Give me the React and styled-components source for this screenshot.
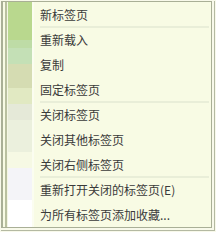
import React from "react";
import styled, { createGlobalStyle } from "styled-components";

const GlobalStyle = createGlobalStyle`
  html, body {
    margin: 0;
    padding: 0;
    background: #f8f9ea;
  }
  body {
    font-family: "Noto Sans CJK SC", "Noto Sans", sans-serif;
  }
`;

const items = [
  { label: "新标签页", sep: true },
  { label: "重新载入" },
  { label: "复制" },
  { label: "固定标签页", sep: true },
  { label: "关闭标签页" },
  { label: "关闭其他标签页" },
  { label: "关闭右侧标签页", sep: true },
  { label: "重新打开关闭的标签页(E)" },
  { label: "为所有标签页添加收藏..." },
];

const App = () => {
  return (
    <>
      <GlobalStyle />
      <Frame>
        <Menu>
          <Gutter />
          <List>
            {items.map((item) => (
              <React.Fragment key={item.label}>
                <Item>{item.label}</Item>
                {item.sep && <Separator />}
              </React.Fragment>
            ))}
          </List>
        </Menu>
      </Frame>
    </>
  );
};

const Frame = styled.div`
  width: 211px;
  margin: 1px 0 0 1px;
  padding: 0 2px 2px 0;
  border-right: 1px solid #b4b9a2;
  border-bottom: 1px solid #b4b9a2;
`;

const Menu = styled.div`
  display: flex;
  background: #f8fbe4;
  border-left: 2px solid #a9af96;
  border-top: 1px solid #a9af96;
  border-right: 1px solid #a9af96;
  border-bottom: 1px solid #a9af96;
`;

const Gutter = styled.div`
  flex: 0 0 24px;
  margin-left: 5px;
  border-right: 2px solid #fbfdf0;
  box-shadow: -1px 0 0 #f4f6e4, -3px 0 0 #b9c0a0;
  background: linear-gradient(
    to bottom,
    #b9d88e 0px,
    #b9d88e 38px,
    #bedca6 38px,
    #bedca6 46px,
    #c4e0b6 46px,
    #c4e0b6 62px,
    #d5dcb2 62px,
    #d5dcb2 86px,
    #e1e9c2 86px,
    #e1e9c2 102px,
    #e5e9d8 102px,
    #e5e9d8 118px,
    #ebf0dd 118px,
    #ebf0dd 150px,
    #f6f9e4 150px,
    #f6f9e4 166px,
    #f4f4f8 166px,
    #f4f4f8 198px,
    #ffffff 198px
  );
`;

const List = styled.div`
  flex: 1;
  display: flex;
  flex-direction: column;
  padding-right: 2px;
`;

const Item = styled.div`
  height: 25px;
  display: flex;
  align-items: center;
  padding-left: 6px;
  font-size: 12px;
  color: #3a3a3a;
  white-space: nowrap;
`;

const Separator = styled.div`
  height: 2px;
  margin: -1px 0 -1px 6px;
  background: #e9eed8;
`;

export default App;
